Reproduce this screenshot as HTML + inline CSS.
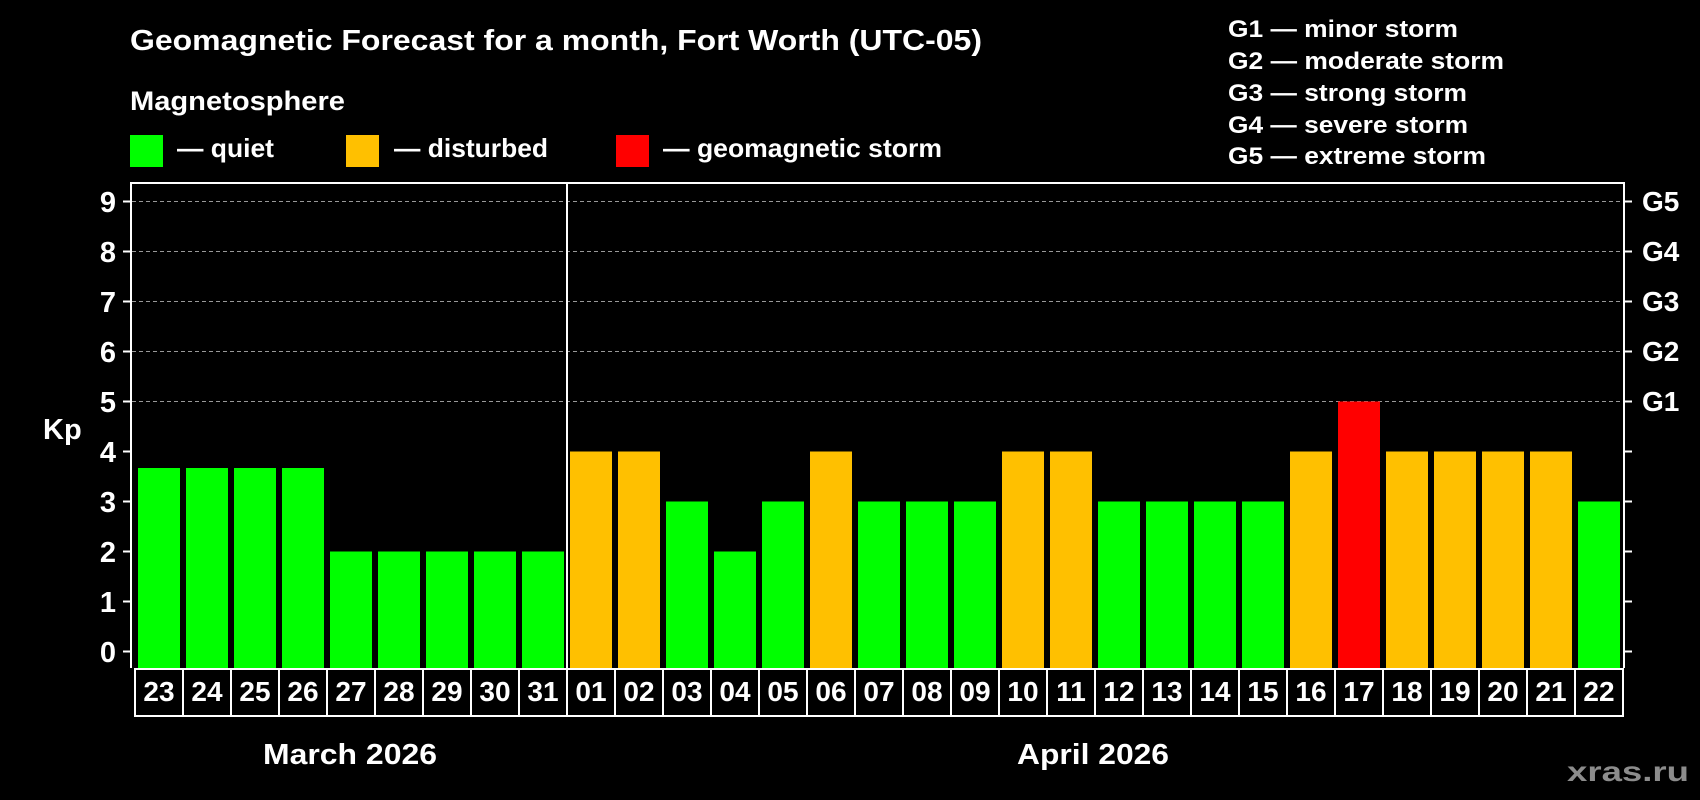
<!DOCTYPE html>
<html><head><meta charset="utf-8"><style>
html,body{margin:0;padding:0;background:#000;}
svg{display:block;}
text{font-family:"Liberation Sans",Arial,sans-serif;font-weight:bold;fill:#fff;}
</style></head><body>
<svg width="1700" height="800" viewBox="0 0 1700 800" xmlns="http://www.w3.org/2000/svg">
<rect width="1700" height="800" fill="#000"/>
<text x="130" y="50" font-size="29" textLength="852" lengthAdjust="spacingAndGlyphs">Geomagnetic Forecast for a month, Fort Worth (UTC-05)</text>
<text x="130" y="110" font-size="27" textLength="215" lengthAdjust="spacingAndGlyphs">Magnetosphere</text>
<rect x="130" y="135" width="33" height="32" fill="#00ff00"/>
<text x="177" y="157" font-size="26" textLength="97" lengthAdjust="spacingAndGlyphs">— quiet</text>
<rect x="346" y="135" width="33" height="32" fill="#ffc000"/>
<text x="394" y="157" font-size="26" textLength="154" lengthAdjust="spacingAndGlyphs">— disturbed</text>
<rect x="616" y="135" width="33" height="32" fill="#ff0000"/>
<text x="663" y="157" font-size="26" textLength="279" lengthAdjust="spacingAndGlyphs">— geomagnetic storm</text>
<g font-size="24">
<text x="1228" y="37" textLength="230" lengthAdjust="spacingAndGlyphs">G1 — minor storm</text>
<text x="1228" y="69" textLength="276" lengthAdjust="spacingAndGlyphs">G2 — moderate storm</text>
<text x="1228" y="101" textLength="239" lengthAdjust="spacingAndGlyphs">G3 — strong storm</text>
<text x="1228" y="133" textLength="240" lengthAdjust="spacingAndGlyphs">G4 — severe storm</text>
<text x="1228" y="164" textLength="258" lengthAdjust="spacingAndGlyphs">G5 — extreme storm</text>
</g>
<g stroke="#999" stroke-width="1" stroke-dasharray="4,3">
<line x1="132" y1="201.5" x2="1624" y2="201.5"/>
<line x1="132" y1="251.5" x2="1624" y2="251.5"/>
<line x1="132" y1="301.5" x2="1624" y2="301.5"/>
<line x1="132" y1="351.5" x2="1624" y2="351.5"/>
<line x1="132" y1="401.5" x2="1624" y2="401.5"/>
</g>
<g>
<rect x="138" y="468" width="42" height="200" fill="#00ff00"/>
<rect x="186" y="468" width="42" height="200" fill="#00ff00"/>
<rect x="234" y="468" width="42" height="200" fill="#00ff00"/>
<rect x="282" y="468" width="42" height="200" fill="#00ff00"/>
<rect x="330" y="551.5" width="42" height="116.5" fill="#00ff00"/>
<rect x="378" y="551.5" width="42" height="116.5" fill="#00ff00"/>
<rect x="426" y="551.5" width="42" height="116.5" fill="#00ff00"/>
<rect x="474" y="551.5" width="42" height="116.5" fill="#00ff00"/>
<rect x="522" y="551.5" width="42" height="116.5" fill="#00ff00"/>
<rect x="570" y="451.5" width="42" height="216.5" fill="#ffc000"/>
<rect x="618" y="451.5" width="42" height="216.5" fill="#ffc000"/>
<rect x="666" y="501.5" width="42" height="166.5" fill="#00ff00"/>
<rect x="714" y="551.5" width="42" height="116.5" fill="#00ff00"/>
<rect x="762" y="501.5" width="42" height="166.5" fill="#00ff00"/>
<rect x="810" y="451.5" width="42" height="216.5" fill="#ffc000"/>
<rect x="858" y="501.5" width="42" height="166.5" fill="#00ff00"/>
<rect x="906" y="501.5" width="42" height="166.5" fill="#00ff00"/>
<rect x="954" y="501.5" width="42" height="166.5" fill="#00ff00"/>
<rect x="1002" y="451.5" width="42" height="216.5" fill="#ffc000"/>
<rect x="1050" y="451.5" width="42" height="216.5" fill="#ffc000"/>
<rect x="1098" y="501.5" width="42" height="166.5" fill="#00ff00"/>
<rect x="1146" y="501.5" width="42" height="166.5" fill="#00ff00"/>
<rect x="1194" y="501.5" width="42" height="166.5" fill="#00ff00"/>
<rect x="1242" y="501.5" width="42" height="166.5" fill="#00ff00"/>
<rect x="1290" y="451.5" width="42" height="216.5" fill="#ffc000"/>
<rect x="1338" y="401.5" width="42" height="266.5" fill="#ff0000"/>
<rect x="1386" y="451.5" width="42" height="216.5" fill="#ffc000"/>
<rect x="1434" y="451.5" width="42" height="216.5" fill="#ffc000"/>
<rect x="1482" y="451.5" width="42" height="216.5" fill="#ffc000"/>
<rect x="1530" y="451.5" width="42" height="216.5" fill="#ffc000"/>
<rect x="1578" y="501.5" width="42" height="166.5" fill="#00ff00"/>
</g>
<g stroke="#fff" stroke-width="2" fill="none">
<path d="M131,668 V183 H1624 V668"/>
<line x1="567" y1="183" x2="567" y2="668"/>
</g>
<g stroke="#fff" stroke-width="2">
<line x1="123" y1="651.5" x2="131" y2="651.5"/><line x1="1624" y1="651.5" x2="1632" y2="651.5"/>
<line x1="123" y1="601.5" x2="131" y2="601.5"/><line x1="1624" y1="601.5" x2="1632" y2="601.5"/>
<line x1="123" y1="551.5" x2="131" y2="551.5"/><line x1="1624" y1="551.5" x2="1632" y2="551.5"/>
<line x1="123" y1="501.5" x2="131" y2="501.5"/><line x1="1624" y1="501.5" x2="1632" y2="501.5"/>
<line x1="123" y1="451.5" x2="131" y2="451.5"/><line x1="1624" y1="451.5" x2="1632" y2="451.5"/>
<line x1="123" y1="401.5" x2="131" y2="401.5"/><line x1="1624" y1="401.5" x2="1632" y2="401.5"/>
<line x1="123" y1="351.5" x2="131" y2="351.5"/><line x1="1624" y1="351.5" x2="1632" y2="351.5"/>
<line x1="123" y1="301.5" x2="131" y2="301.5"/><line x1="1624" y1="301.5" x2="1632" y2="301.5"/>
<line x1="123" y1="251.5" x2="131" y2="251.5"/><line x1="1624" y1="251.5" x2="1632" y2="251.5"/>
<line x1="123" y1="201.5" x2="131" y2="201.5"/><line x1="1624" y1="201.5" x2="1632" y2="201.5"/>
</g>
<g font-size="29" text-anchor="end">
<text x="116" y="662">0</text><text x="116" y="612">1</text><text x="116" y="562">2</text><text x="116" y="512">3</text><text x="116" y="462">4</text><text x="116" y="412">5</text><text x="116" y="362">6</text><text x="116" y="312">7</text><text x="116" y="262">8</text><text x="116" y="212">9</text>
</g>
<g font-size="28">
<text x="1642" y="211">G5</text><text x="1642" y="261">G4</text><text x="1642" y="311">G3</text><text x="1642" y="361">G2</text><text x="1642" y="411">G1</text>
</g>
<text x="43" y="439" font-size="29">Kp</text>
<g fill="#000" stroke="#fff" stroke-width="2">
<rect x="135" y="669" width="1488" height="47"/>
</g>
<g stroke="#fff" stroke-width="2">
<line x1="183" y1="669" x2="183" y2="716"/><line x1="231" y1="669" x2="231" y2="716"/><line x1="279" y1="669" x2="279" y2="716"/><line x1="327" y1="669" x2="327" y2="716"/><line x1="375" y1="669" x2="375" y2="716"/><line x1="423" y1="669" x2="423" y2="716"/><line x1="471" y1="669" x2="471" y2="716"/><line x1="519" y1="669" x2="519" y2="716"/><line x1="567" y1="669" x2="567" y2="716"/><line x1="615" y1="669" x2="615" y2="716"/><line x1="663" y1="669" x2="663" y2="716"/><line x1="711" y1="669" x2="711" y2="716"/><line x1="759" y1="669" x2="759" y2="716"/><line x1="807" y1="669" x2="807" y2="716"/><line x1="855" y1="669" x2="855" y2="716"/><line x1="903" y1="669" x2="903" y2="716"/><line x1="951" y1="669" x2="951" y2="716"/><line x1="999" y1="669" x2="999" y2="716"/><line x1="1047" y1="669" x2="1047" y2="716"/><line x1="1095" y1="669" x2="1095" y2="716"/><line x1="1143" y1="669" x2="1143" y2="716"/><line x1="1191" y1="669" x2="1191" y2="716"/><line x1="1239" y1="669" x2="1239" y2="716"/><line x1="1287" y1="669" x2="1287" y2="716"/><line x1="1335" y1="669" x2="1335" y2="716"/><line x1="1383" y1="669" x2="1383" y2="716"/><line x1="1431" y1="669" x2="1431" y2="716"/><line x1="1479" y1="669" x2="1479" y2="716"/><line x1="1527" y1="669" x2="1527" y2="716"/><line x1="1575" y1="669" x2="1575" y2="716"/>
</g>
<g font-size="28" text-anchor="middle">
<text x="159" y="701">23</text><text x="207" y="701">24</text><text x="255" y="701">25</text><text x="303" y="701">26</text><text x="351" y="701">27</text><text x="399" y="701">28</text><text x="447" y="701">29</text><text x="495" y="701">30</text><text x="543" y="701">31</text><text x="591" y="701">01</text><text x="639" y="701">02</text><text x="687" y="701">03</text><text x="735" y="701">04</text><text x="783" y="701">05</text><text x="831" y="701">06</text><text x="879" y="701">07</text><text x="927" y="701">08</text><text x="975" y="701">09</text><text x="1023" y="701">10</text><text x="1071" y="701">11</text><text x="1119" y="701">12</text><text x="1167" y="701">13</text><text x="1215" y="701">14</text><text x="1263" y="701">15</text><text x="1311" y="701">16</text><text x="1359" y="701">17</text><text x="1407" y="701">18</text><text x="1455" y="701">19</text><text x="1503" y="701">20</text><text x="1551" y="701">21</text><text x="1599" y="701">22</text>
</g>
<text x="263" y="764" font-size="29" textLength="174" lengthAdjust="spacingAndGlyphs">March 2026</text>
<text x="1017" y="764" font-size="29" textLength="152" lengthAdjust="spacingAndGlyphs">April 2026</text>
<text x="1567" y="781" font-size="28" textLength="122" lengthAdjust="spacingAndGlyphs" style="fill:#8c8c8c">xras.ru</text>
</svg>
</body></html>
